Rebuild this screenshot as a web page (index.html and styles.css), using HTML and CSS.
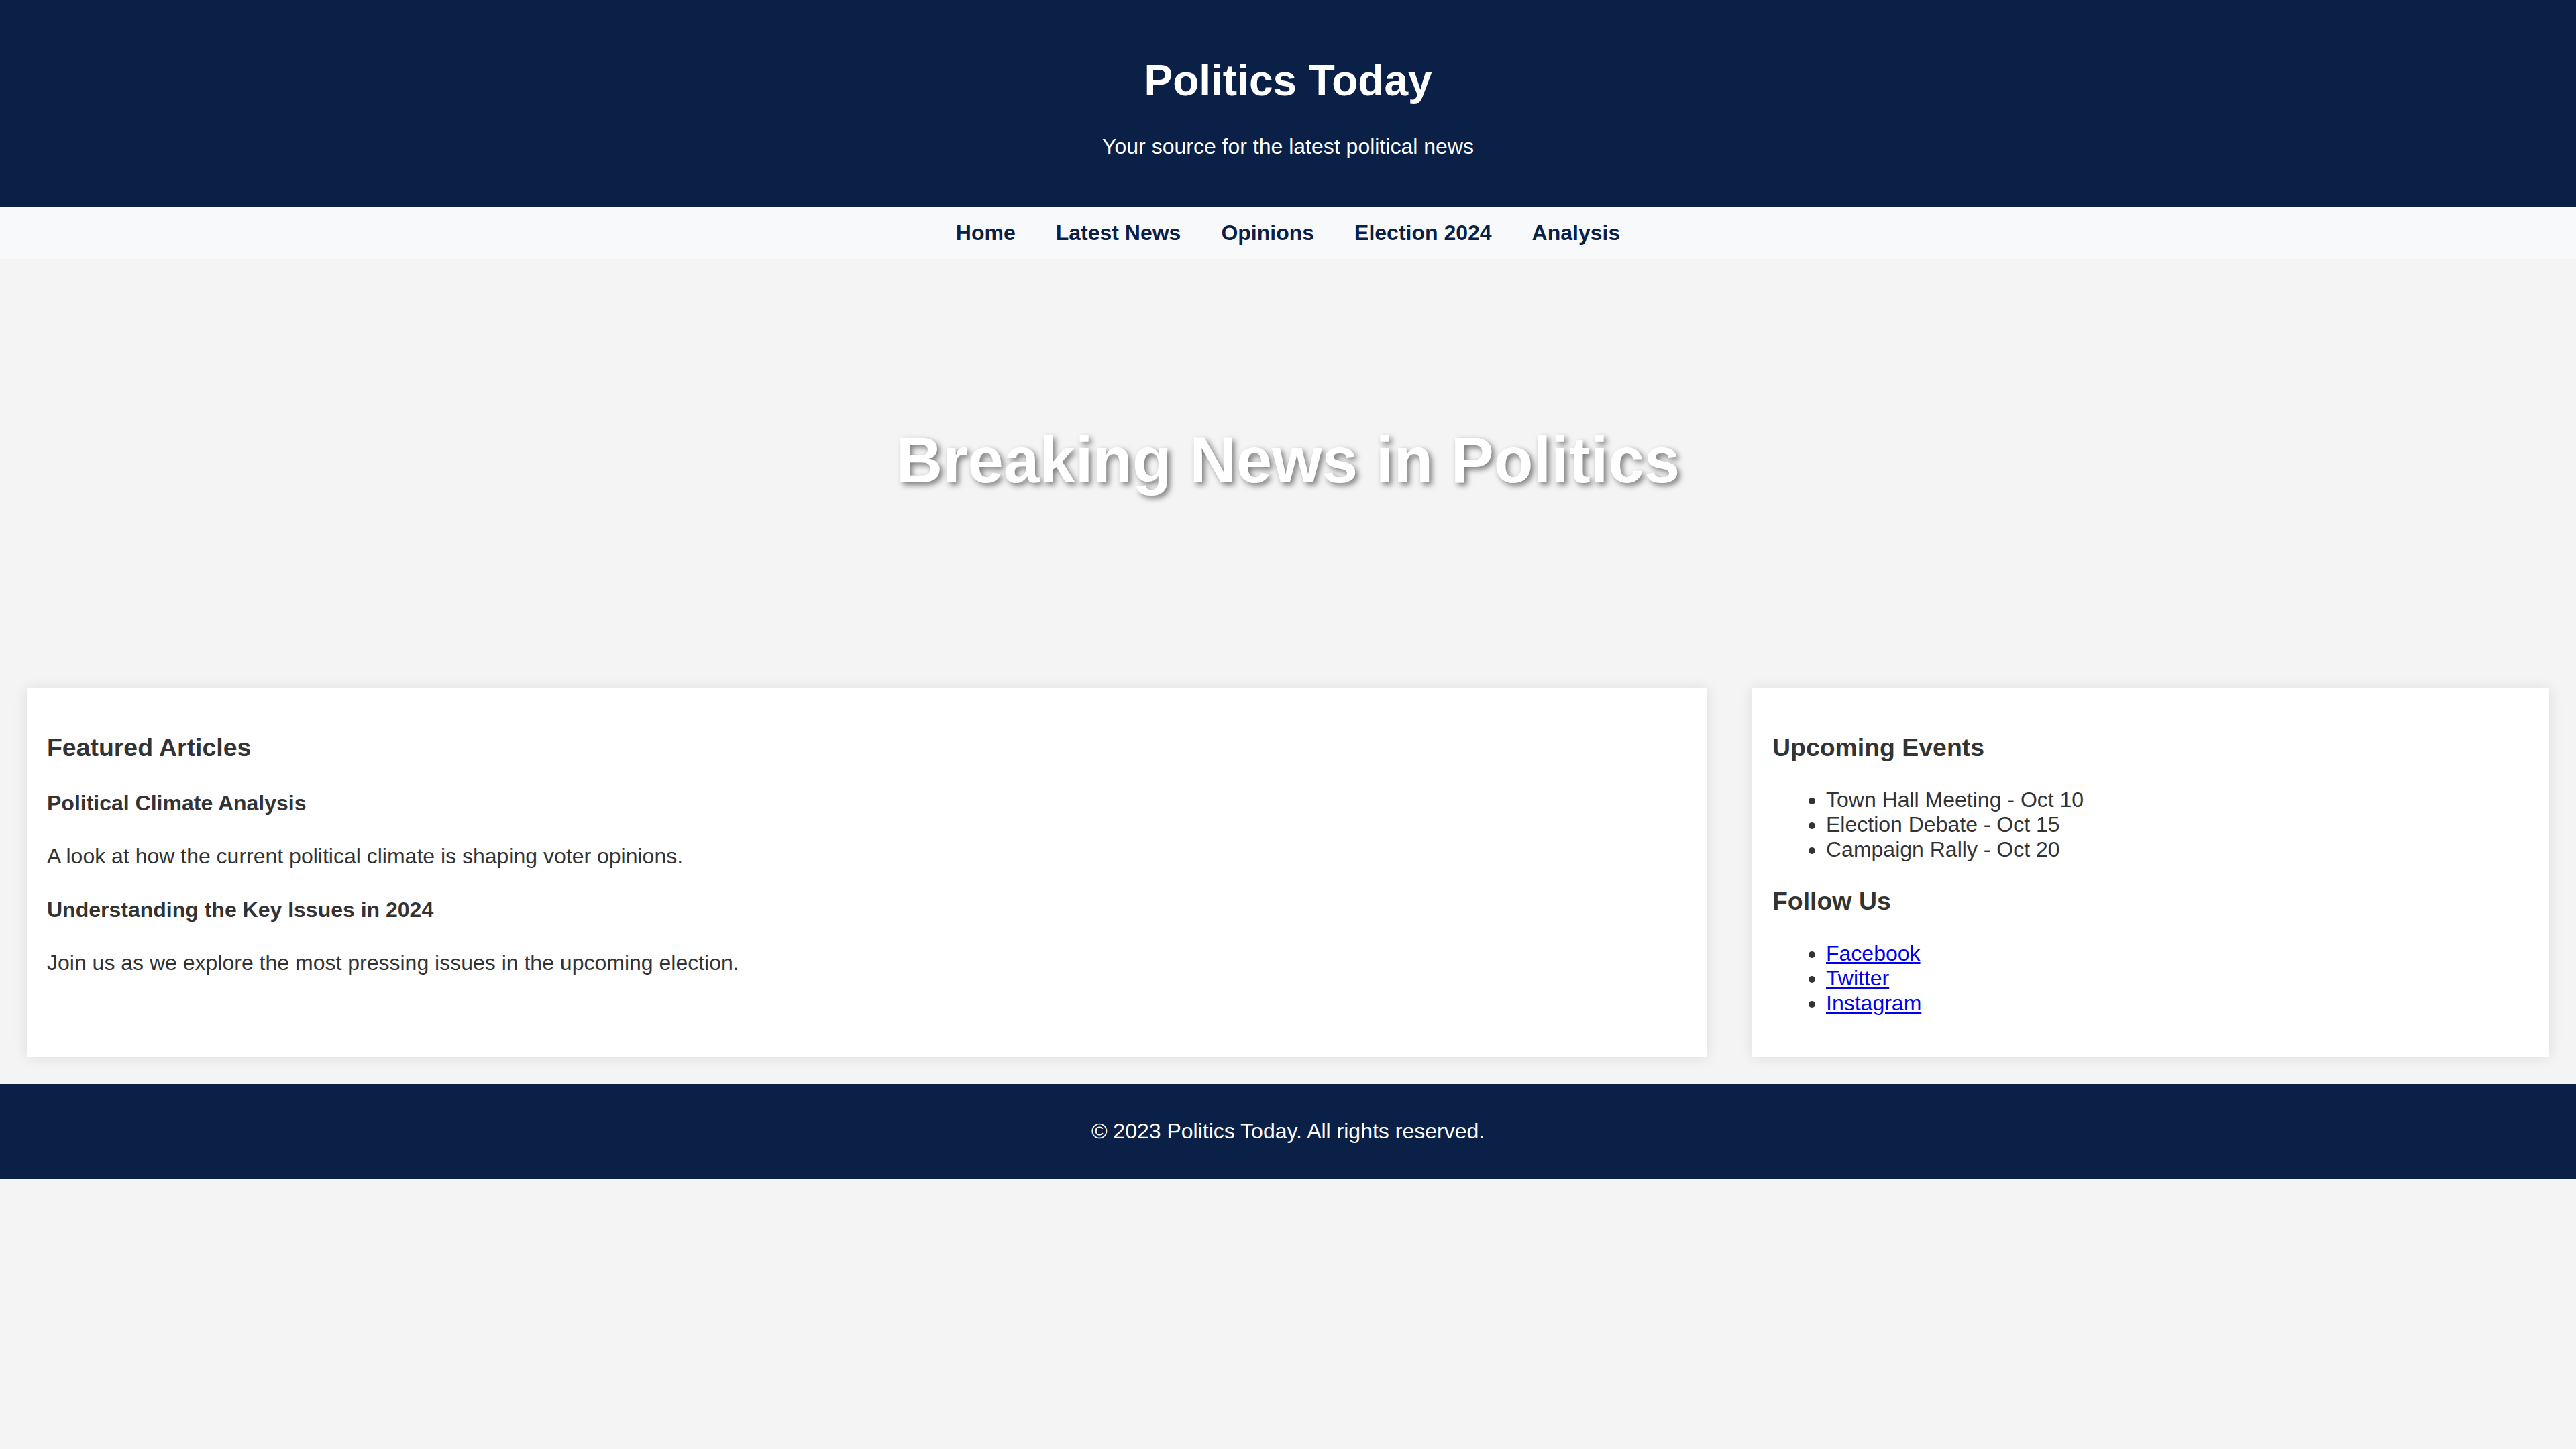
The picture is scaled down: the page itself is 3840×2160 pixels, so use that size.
FILE: index.html
```html
<!DOCTYPE html>
<html lang="en">
<head>
<meta charset="utf-8">
<title>Politics Today</title>
<link rel="stylesheet" href="styles.css">
</head>
<body>
<header class="site-header">
  <h1 class="site-title">Politics Today</h1>
  <p class="site-tagline">Your source for the latest political news</p>
</header>
<nav class="site-nav">
  <ul class="nav-list">
    <li><a class="nav-link" href="#">Home</a></li>
    <li><a class="nav-link" href="#">Latest News</a></li>
    <li><a class="nav-link" href="#">Opinions</a></li>
    <li><a class="nav-link" href="#">Election 2024</a></li>
    <li><a class="nav-link" href="#">Analysis</a></li>
  </ul>
</nav>
<section class="hero">
  <h2 class="hero-title">Breaking News in Politics</h2>
</section>
<div class="content">
  <main class="card main-card">
    <h3 class="card-heading">Featured Articles</h3>
    <h4 class="article-title">Political Climate Analysis</h4>
    <p class="article-text">A look at how the current political climate is shaping voter opinions.</p>
    <h4 class="article-title">Understanding the Key Issues in 2024</h4>
    <p class="article-text">Join us as we explore the most pressing issues in the upcoming election.</p>
  </main>
  <aside class="card side-card">
    <h3 class="card-heading">Upcoming Events</h3>
    <ul class="side-list">
      <li>Town Hall Meeting - Oct 10</li>
      <li>Election Debate - Oct 15</li>
      <li>Campaign Rally - Oct 20</li>
    </ul>
    <h3 class="card-heading">Follow Us</h3>
    <ul class="side-list">
      <li><a class="social-link" href="#">Facebook</a></li>
      <li><a class="social-link" href="#">Twitter</a></li>
      <li><a class="social-link" href="#">Instagram</a></li>
    </ul>
  </aside>
</div>
<footer class="site-footer">
  <p class="footer-text">&copy; 2023 Politics Today. All rights reserved.</p>
</footer>
</body>
</html>
```
FILE: styles.css
```css
html, body {
  margin: 0;
  padding: 0;
}
body {
  font-family: "Liberation Sans", Arial, Helvetica, sans-serif;
  font-size: 32px;
  background: #f4f4f4;
  color: #333;
}
.site-header {
  background: #0a2046;
  color: #fff;
  text-align: center;
  padding: 40px;
}
.site-title {
  font-size: 64px;
  margin: 0.67em 0;
}
.site-tagline {
  margin: 1em 0;
}
.site-nav {
  background: #f8f9fa;
}
.nav-list {
  list-style: none;
  margin: 0;
  padding: 20px 0;
  display: flex;
  justify-content: center;
  gap: 60px;
}
.nav-link {
  color: #0a2046;
  font-weight: bold;
  text-decoration: none;
}
.hero {
  height: 600px;
  display: flex;
  align-items: center;
  justify-content: center;
}
.hero-title {
  margin: 0;
  font-size: 96px;
  color: #fff;
  text-shadow: 4px 4px 8px rgba(0, 0, 0, 0.5);
}
.content {
  display: flex;
  justify-content: space-between;
  align-items: stretch;
  padding: 40px;
}
.card {
  background: #fff;
  padding: 30px;
  box-shadow: 0 0 20px rgba(0, 0, 0, 0.1);
}
.main-card {
  width: 65%;
}
.side-card {
  width: 30%;
}
.card-heading {
  font-size: 37.44px;
  margin: 1em 0;
}
.article-title {
  font-size: 32px;
  margin: 1.33em 0;
}
.article-text {
  margin: 1em 0;
}
.side-list {
  margin: 1em 0;
  padding-left: 80px;
}
.social-link {
  color: #0000ee;
  text-decoration: underline;
}
.site-footer {
  background: #0a2046;
  color: #fff;
  text-align: center;
  padding: 20px;
}
.footer-text {
  margin: 1em 0;
}
```
